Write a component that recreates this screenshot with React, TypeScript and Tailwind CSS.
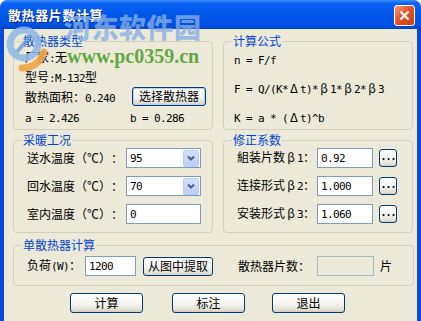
import clsx from 'clsx';
import type { ReactNode } from 'react';

const CJK = "font-['Noto_Sans_CJK_SC','Liberation_Sans',sans-serif]";

// SimSun-like grid: ascii is 6px wide, everything else 12px
function Sim({ t, className }: { t: string; className?: string }) {
  const parts = t.split(/([\x20-\x7e]+)/).filter(Boolean);
  return (
    <span className={clsx('whitespace-pre', className)}>
      {parts.map((p, i) =>
        /^[\x20-\x7e]+$/.test(p) ? (
          <span key={i} className="font-['DejaVu_Sans_Mono',monospace] text-[11px] tracking-[-0.62px]">
            {p}
          </span>
        ) : (
          [...p].map((c, j) => (
            <span key={`${i}-${j}`} className="inline-block w-[12px] text-center">
              {c}
            </span>
          ))
        )
      )}
    </span>
  );
}

function Group({ title, className, children }: { title: string; className?: string; children: ReactNode }) {
  return (
    <fieldset className={clsx('rounded-[4px] border border-[#D0D0BF]', className)}>
      <legend className="ml-[8px] h-[14px] px-[1px] leading-[14px] text-[#0046D5]">
        <Sim t={title} />
      </legend>
      {children}
    </fieldset>
  );
}

const xpButton =
  'flex items-center justify-center rounded-[3px] border border-[#003C74] bg-[linear-gradient(180deg,#FFFFFF_0%,#F5F4F0_55%,#E3E0D6_85%,#D2CCC0_100%)] text-black';

function Button({ label, className }: { label: string; className?: string }) {
  return (
    <div className={clsx(xpButton, className)}>
      <Sim t={label} />
    </div>
  );
}

function Field({ value, className, muted }: { value: string; className?: string; muted?: boolean }) {
  return (
    <div
      className={clsx(
        'flex h-[20px] items-center border pl-[3px]',
        muted ? 'border-[#A5B8CC] bg-[#ECE9D8]' : 'border-[#7F9DB9] bg-white',
        className
      )}
    >
      <Sim t={value} />
    </div>
  );
}

function Combo({ value }: { value: string }) {
  return (
    <div className="flex h-[20px] w-[75px] items-center border border-[#7F9DB9] bg-white pl-[3px]">
      <Sim t={value} />
      <div className="mr-[1px] ml-auto flex h-[17px] w-[16px] items-center justify-center rounded-[2px] border border-[#B8CBF6] bg-[linear-gradient(180deg,#D3E0FD_0%,#B9CEF8_100%)]">
        <svg width="8" height="6" viewBox="0 0 8 6">
          <path d="M1 1.5 L4 4.5 L7 1.5" fill="none" stroke="#4D6185" strokeWidth="2" />
        </svg>
      </div>
    </div>
  );
}

function Dots() {
  return (
    <div className={clsx(xpButton, 'h-[18px] w-[18px] pb-[3px] font-bold')}>
      <span className="font-['DejaVu_Sans_Mono',monospace] text-[10px] leading-none tracking-[-1px]">...</span>
    </div>
  );
}

function Watermark() {
  return (
    <div className="pointer-events-none absolute top-0 left-0">
      <svg className="absolute top-[22px] left-[4px]" width="44" height="50" viewBox="0 0 44 50">
        <circle cx="20" cy="22" r="14" fill="none" stroke="#8DB7E6" strokeWidth="7" opacity="0.85" />
        <path d="M13 30 L27 13" stroke="#6E9FDB" strokeWidth="4" opacity="0.8" />
        <path d="M18 46 Q34 46 40 30" fill="none" stroke="#F2A548" strokeWidth="7" strokeLinecap="round" opacity="0.9" />
      </svg>
      <div
        className={clsx(
          'absolute top-[11px] left-[64px] text-[27px] leading-[32px] font-black tracking-[0.5px] whitespace-nowrap text-[#86AEE6]/80',
          CJK
        )}
      >
        河东软件园
      </div>
      <div className="absolute top-[45px] left-[67px] font-['Liberation_Serif',serif] text-[20px] leading-[22px] font-bold whitespace-nowrap text-[#4E9F2C]/90">
        www.pc0359.cn
      </div>
    </div>
  );
}

export default function App() {
  return (
    <div className={clsx('relative h-[321px] w-[421px] overflow-hidden rounded-t-[8px] bg-[#0A48DB] text-[12px] leading-[14px] text-black', CJK)}>
      <div className="flex h-[29px] items-center justify-between bg-[linear-gradient(180deg,#3D8FFF_0%,#0A60F2_12%,#0057EA_50%,#0052E3_85%,#0044CC_100%)] pt-[1px] pr-[6px] pl-[8px]">
        <span className="text-[13px] font-bold tracking-[0.6px] text-white [text-shadow:1px_1px_0_#0A2A8A]">散热器片数计算</span>
        <div className="flex h-[21px] w-[21px] items-center justify-center rounded-[3px] border border-white bg-[linear-gradient(135deg,#F49A78_0%,#E2552B_45%,#C83C14_100%)]">
          <svg width="11" height="11" viewBox="0 0 11 11">
            <path d="M1.5 1.5 L9.5 9.5 M9.5 1.5 L1.5 9.5" stroke="white" strokeWidth="2.2" />
          </svg>
        </div>
      </div>

      <div className="mx-[4px] flex h-[292px] flex-col bg-[#ECE9D8] pt-[5px] pl-[9px]">
        <div className="flex gap-[10px]">
          <Group title="散热器类型" className="h-[96px] w-[200px]">
            <div className="flex flex-col pl-[11px]">
              <div className="flex h-[20px] items-center">
                <Sim t="厂家:无" />
              </div>
              <div className="flex h-[20px] items-center">
                <Sim t="型号:M-132型" />
              </div>
              <div className="flex h-[20px] items-center">
                <Sim t="散热面积：0.240" className="w-[107px]" />
                <Button label="选择散热器" className="h-[19px] w-[74px] -translate-y-[2px] shadow-[inset_0_0_0_1px_#B5CFF5]" />
              </div>
              <div className="flex h-[20px] items-center">
                <Sim t="a = 2.426" className="w-[105px]" />
                <Sim t="b = 0.286" />
              </div>
            </div>
          </Group>
          <Group title="计算公式" className="h-[96px] w-[190px]">
            <div className="mt-[4px] flex flex-col gap-[13px] pl-[10px]">
              <Sim t="n = F/f" />
              <Sim t="F = Q/(K*Δt)*β1*β2*β3" />
              <Sim t="K = a * (Δt)^b" />
            </div>
          </Group>
        </div>

        <div className="mt-[3px] flex gap-[10px]">
          <Group title="采暖工况" className="h-[100px] w-[200px]">
            <div className="mt-[1px] flex flex-col gap-[8px] pl-[13px]">
              <div className="flex h-[20px] items-center">
                <Sim t="送水温度（℃）：" className="w-[99px]" />
                <Combo value="95" />
              </div>
              <div className="flex h-[20px] items-center">
                <Sim t="回水温度（℃）：" className="w-[99px]" />
                <Combo value="70" />
              </div>
              <div className="flex h-[20px] items-center">
                <Sim t="室内温度（℃）：" className="w-[99px]" />
                <Field value="0" className="w-[75px]" />
              </div>
            </div>
          </Group>
          <Group title="修正系数" className="h-[100px] w-[190px]">
            <div className="mt-[1px] flex flex-col gap-[8px] pl-[13px]">
              {[
                ['組装片数β1：', '0.92'],
                ['连接形式β2：', '1.000'],
                ['安装形式β3：', '1.060'],
              ].map(([label, value]) => (
                <div key={label} className="flex h-[20px] items-center">
                  <Sim t={label} className="w-[80px]" />
                  <Field value={value} className="w-[56px]" />
                  <div className="ml-[6px]">
                    <Dots />
                  </div>
                </div>
              ))}
            </div>
          </Group>
        </div>

        <Group title="单散热器计算" className="mt-[5px] h-[48px] w-[401px]">
          <div className="mt-[4px] flex h-[20px] items-center pl-[13px]">
            <Sim t="负荷(W)：" className="w-[58px]" />
            <Field value="1200" className="w-[51px]" />
            <Button label="从图中提取" className="ml-[7px] h-[19px] w-[70px]" />
            <Sim t="散热器片数：" className="ml-[25px] w-[79px]" />
            <Field value="" muted className="w-[57px]" />
            <Sim t="片" className="ml-[6px]" />
          </div>
        </Group>

        <div className="mt-[7px] ml-[57px] flex">
          <Button label="计算" className="h-[20px] w-[73px]" />
          <Button label="标注" className="ml-[29px] h-[20px] w-[73px]" />
          <Button label="退出" className="ml-[27px] h-[20px] w-[73px]" />
        </div>
      </div>

      <Watermark />
    </div>
  );
}
